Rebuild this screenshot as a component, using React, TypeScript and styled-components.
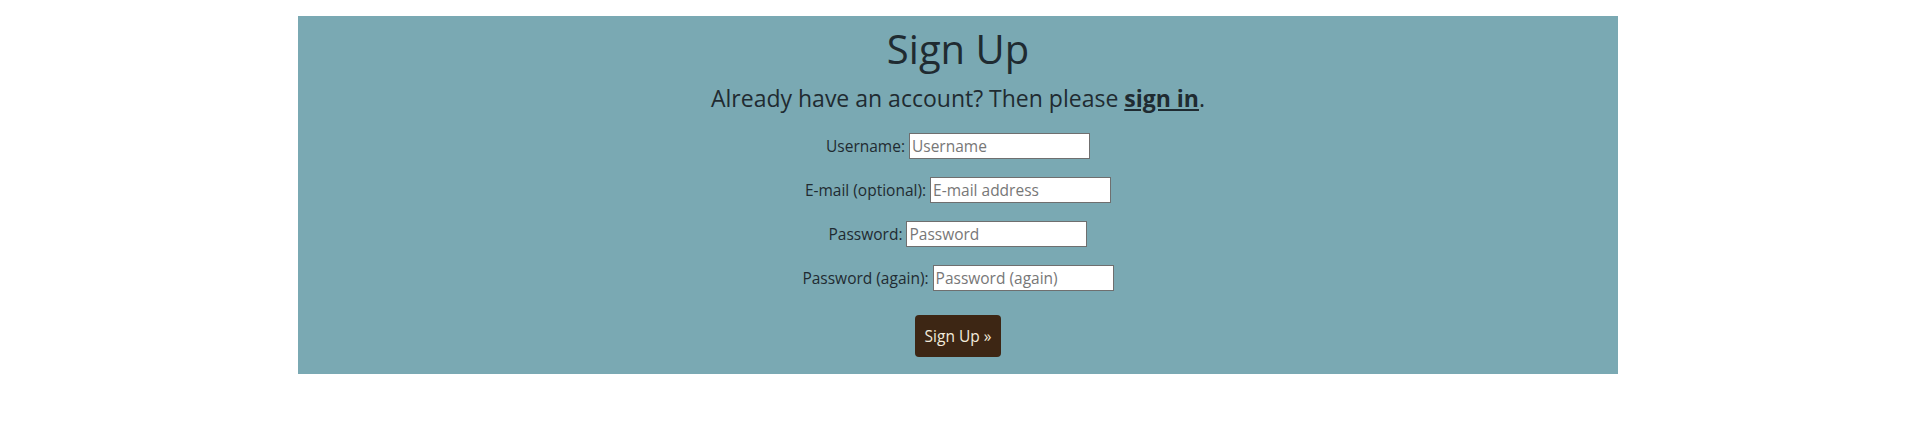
import React from "react";
import styled, { createGlobalStyle } from "styled-components";

const FONT = `"Open Sans", "Noto Sans", sans-serif`;

const Global = createGlobalStyle`
  html, body { margin: 0; padding: 0; background: #ffffff; }
  body { font-family: ${FONT}; color: #1f2b31; }
`;

const Page = styled.div`
  padding: 16px 2px 0 0;
`;

const Panel = styled.section`
  width: 1320px;
  margin: 0 auto;
  background: #7aa9b3;
  padding: 4px 0 16px;
  display: flex;
  flex-direction: column;
  align-items: center;
  box-sizing: border-box;
  height: 358px;
`;

const Title = styled.h1`
  margin: 0;
  font-size: 40px;
  font-weight: 400;
  line-height: 58px;
  color: #1f2b31;
`;

const Lead = styled.p`
  margin: 0;
  font-size: 23px;
  line-height: 40px;
  color: #1f2b31;
`;

const Link = styled.a`
  color: #1f2b31;
  font-weight: 700;
  text-decoration: underline;
`;

const Form = styled.form`
  display: flex;
  flex-direction: column;
  align-items: center;
  margin-top: 15px;
  gap: 18px;
`;

const Row = styled.div`
  display: flex;
  align-items: center;
  gap: 4px;
  height: 26px;
`;

const Label = styled.label`
  font-size: 15.5px;
  color: #1f2b31;
`;

const Input = styled.input`
  width: 181px;
  height: 26px;
  box-sizing: border-box;
  border: 1px solid #6f6f6f;
  border-radius: 0;
  background: #fff;
  padding: 0 2px;
  font-family: ${FONT};
  font-size: 15.5px;
  color: #1f2b31;
  &::placeholder { color: #777; }
`;

const Button = styled.button`
  margin-top: 6px;
  width: 86px;
  height: 42px;
  border: none;
  border-radius: 4px;
  background: #3d2614;
  color: #f3ebdc;
  font-family: ${FONT};
  font-size: 15.5px;
  padding: 0;
  cursor: pointer;
`;

const fields = [
  { id: "username", label: "Username:", placeholder: "Username", type: "text" },
  { id: "email", label: "E-mail (optional):", placeholder: "E-mail address", type: "email" },
  { id: "password1", label: "Password:", placeholder: "Password", type: "password" },
  { id: "password2", label: "Password (again):", placeholder: "Password (again)", type: "password" },
];

export default function App() {
  return (
    <Page>
      <Global />
      <Panel>
        <Title>Sign Up</Title>
        <Lead>
          Already have an account? Then please <Link href="#">sign in</Link>.
        </Lead>
        <Form onSubmit={(e) => e.preventDefault()}>
          {fields.map((f) => (
            <Row key={f.id}>
              <Label htmlFor={f.id}>{f.label}</Label>
              <Input id={f.id} type={f.type} placeholder={f.placeholder} />
            </Row>
          ))}
          <Button type="submit">Sign Up »</Button>
        </Form>
      </Panel>
    </Page>
  );
}
